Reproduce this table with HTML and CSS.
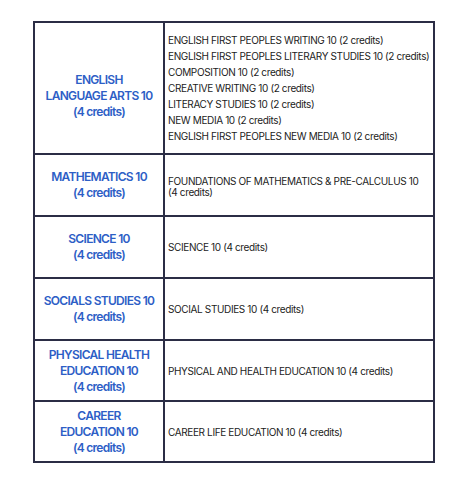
FILE: index.html
```html
<!DOCTYPE html>
<html>
<head>
<meta charset="utf-8">
<link rel="stylesheet" href="styles.css">
</head>
<body>
<div class="table">
  <div class="subject subject-first">ENGLISH<br>LANGUAGE ARTS 10<br>(4 credits)</div>
  <div class="courses courses-list">
    <p>ENGLISH FIRST PEOPLES WRITING 10 (2 credits)</p>
    <p>ENGLISH FIRST PEOPLES LITERARY STUDIES 10 (2 credits)</p>
    <p>COMPOSITION 10 (2 credits)</p>
    <p>CREATIVE WRITING 10 (2 credits)</p>
    <p>LITERACY STUDIES 10 (2 credits)</p>
    <p>NEW MEDIA 10 (2 credits)</p>
    <p>ENGLISH FIRST PEOPLES NEW MEDIA 10 (2 credits)</p>
  </div>

  <div class="subject">MATHEMATICS 10<br>(4 credits)</div>
  <div class="courses courses-tight">FOUNDATIONS OF MATHEMATICS &amp; PRE-CALCULUS 10<br>(4 credits)</div>

  <div class="subject">SCIENCE 10<br>(4 credits)</div>
  <div class="courses">SCIENCE 10 (4 credits)</div>

  <div class="subject">SOCIALS STUDIES 10<br>(4 credits)</div>
  <div class="courses">SOCIAL STUDIES 10 (4 credits)</div>

  <div class="subject">PHYSICAL HEALTH<br>EDUCATION 10<br>(4 credits)</div>
  <div class="courses">PHYSICAL AND HEALTH EDUCATION 10 (4 credits)</div>

  <div class="subject">CAREER<br>EDUCATION 10<br>(4 credits)</div>
  <div class="courses">CAREER LIFE EDUCATION 10 (4 credits)</div>
</div>
</body>
</html>
```
FILE: styles.css
```css
html, body {
  margin: 0;
  padding: 0;
  background: #ffffff;
}

body {
  padding: 21px 0 0 33px;
  font-family: Inter, "Liberation Sans", sans-serif;
}

.table {
  display: grid;
  width: 398px;
  grid-template-columns: 128px 268px;
  grid-template-rows: 130px 60px 60px 60px 59px 59px;
  gap: 2px;
  padding: 2px;
  background: #2b2d45;
}

.subject,
.courses {
  background: #ffffff;
  display: flex;
  flex-direction: column;
  justify-content: center;
}

.subject {
  align-items: center;
  text-align: center;
  color: #2d5ec6;
  font-weight: 600;
  font-size: 12px;
  line-height: 16px;
  letter-spacing: -0.7px;
}

.subject-first {
  padding-top: 16px;
}

.courses {
  padding: 0 2px 0 3px;
  color: #1c1c22;
  font-size: 10px;
  line-height: 16px;
  letter-spacing: -0.37px;
  white-space: nowrap;
}

.courses-tight {
  line-height: 11px;
  padding-top: 4px;
}

.courses-list p {
  margin: 0;
}
```
